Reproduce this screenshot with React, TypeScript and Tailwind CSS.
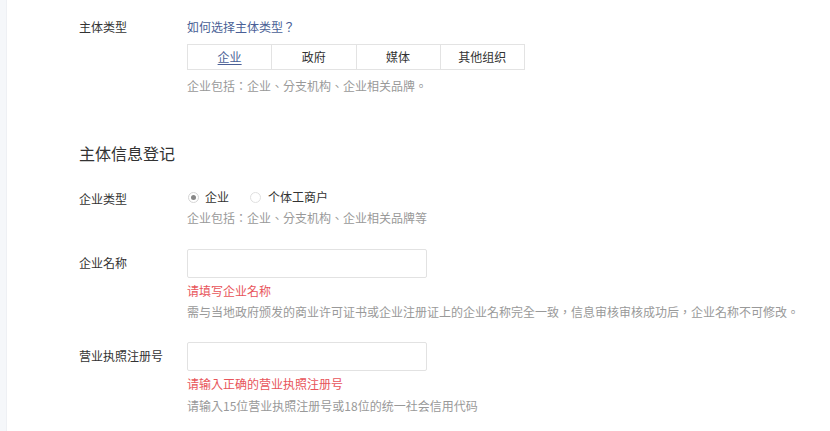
import React from "react";

const font = { fontFamily: '"Noto Sans CJK TC", "Noto Sans CJK SC", "Noto Sans", sans-serif' };

const Label = ({ children }: { children: React.ReactNode }) => (
  <div className="w-[108px] shrink-0 text-[12px] leading-[18px] text-[#333]">{children}</div>
);

const Hint = ({ children, red }: { children: React.ReactNode; red?: boolean }) => (
  <div className={`text-[12px] leading-[18px] ${red ? "text-[#e8545a]" : "text-[#999]"}`}>{children}</div>
);

export default function App() {
  const tabs = ["企业", "政府", "媒体", "其他组织"];
  return (
    <div className="flex min-h-[431px] w-[830px] bg-white" style={font}>
      <div className="w-[7px] shrink-0 bg-[#f5f7fa] border-r border-[#eef0f4]" />
      <div className="flex-1 pl-[72px] pt-[18px]">
        {/* 主体类型 */}
        <div className="flex">
          <Label>主体类型</Label>
          <div>
            <a className="block text-[12px] leading-[18px] text-[#4a5f96]">如何选择主体类型？</a>
            <div className="mt-[8px] flex h-[26px] w-[338px] border border-[#e3e3e3]">
              {tabs.map((t, i) => (
                <div
                  key={t}
                  className={`flex flex-1 items-center justify-center text-[12px] ${
                    i > 0 ? "border-l border-[#e3e3e3]" : ""
                  } ${i === 0 ? "text-[#4a5f96] underline underline-offset-2" : "text-[#333]"}`}
                >
                  {t}
                </div>
              ))}
            </div>
            <div className="mt-[7px]">
              <Hint>企业包括：企业、分支机构、企业相关品牌。</Hint>
            </div>
          </div>
        </div>

        {/* heading */}
        <div className="mt-[46px] text-[16px] leading-[24px] text-[#333]">主体信息登记</div>

        {/* 企业类型 */}
        <div className="mt-[23px] flex">
          <div className="pt-[2px]">
            <Label>企业类型</Label>
          </div>
          <div>
            <div className="flex items-center text-[12px] leading-[18px] text-[#333]">
              <span className="mr-[6px] ml-[1px] flex h-[11px] w-[11px] items-center justify-center rounded-full border border-[#d5d5d5]">
                <span className="h-[5px] w-[5px] rounded-full bg-[#888]" />
              </span>
              <span>企业</span>
              <span className="ml-[21px] mr-[7px] h-[11px] w-[11px] rounded-full border border-[#e0e0e0]" />
              <span>个体工商户</span>
            </div>
            <div className="mt-[3px]">
              <Hint>企业包括：企业、分支机构、企业相关品牌等</Hint>
            </div>
          </div>
        </div>

        {/* 企业名称 */}
        <div className="mt-[22px] flex">
          <div className="pt-[5px]">
            <Label>企业名称</Label>
          </div>
          <div>
            <input className="block h-[29px] w-[240px] rounded-[2px] border border-[#e2e2e2] px-2 text-[12px] outline-none" />
            <div className="mt-[4px]">
              <Hint red>请填写企业名称</Hint>
            </div>
            <div className="mt-[3px]">
              <Hint>需与当地政府颁发的商业许可证书或企业注册证上的企业名称完全一致，信息审核审核成功后，企业名称不可修改。</Hint>
            </div>
          </div>
        </div>

        {/* 营业执照注册号 */}
        <div className="mt-[21px] flex">
          <div className="pt-[5px]">
            <Label>营业执照注册号</Label>
          </div>
          <div>
            <input className="block h-[29px] w-[240px] rounded-[2px] border border-[#e2e2e2] px-2 text-[12px] outline-none" />
            <div className="mt-[4px]">
              <Hint red>请输入正确的营业执照注册号</Hint>
            </div>
            <div className="mt-[4px]">
              <Hint>请输入15位营业执照注册号或18位的统一社会信用代码</Hint>
            </div>
          </div>
        </div>
      </div>
    </div>
  );
}
